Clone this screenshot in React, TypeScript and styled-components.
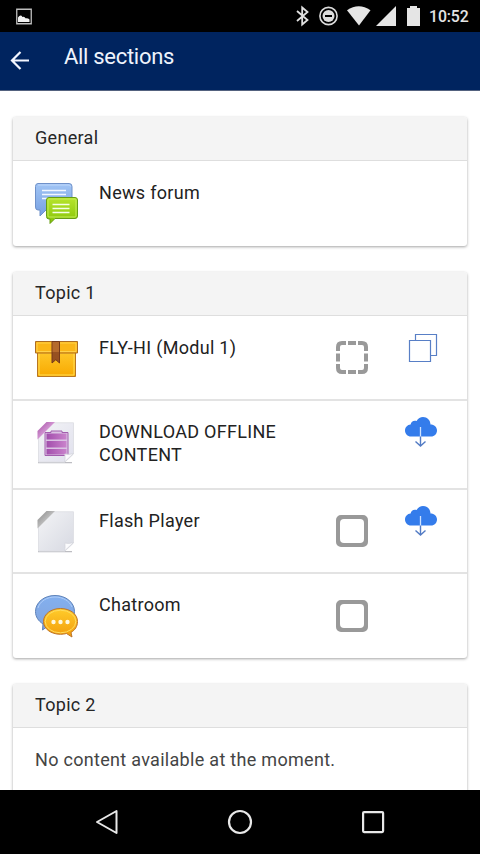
import React from "react";
import styled, { createGlobalStyle } from "styled-components";

const Global = createGlobalStyle`
  * { box-sizing: border-box; }
  body { margin: 0; background: #fff; font-family: Roboto, "Liberation Sans", sans-serif; }
  svg { display: block; flex: none; }
`;

const Screen = styled.div`
  width: 480px;
  height: 854px;
  display: flex;
  flex-direction: column;
  overflow: hidden;
  background: #fff;
`;

const StatusBar = styled.div`
  height: 32px;
  flex: none;
  background: #000;
  display: flex;
  align-items: center;
  padding: 0 9px 0 16px;
`;

const StatusIcons = styled.div`
  margin-left: auto;
  display: flex;
  align-items: center;
`;

const Clock = styled.span`
  width: 42px;
  margin-left: 9px;
  color: #e4e4e4;
  font-size: 15.8px;
  font-weight: 500;
  line-height: 33px;
  letter-spacing: -0.1px;
  white-space: nowrap;
`;

const AppBar = styled.header`
  height: 59px;
  flex: none;
  background: #00245f;
  border-bottom: 1px solid #53627f;
  display: flex;
  align-items: center;
  padding-left: 10px;
`;

const Title = styled.h1`
  margin: 0 0 9px 34px;
  color: #eef3fc;
  font-size: 22px;
  font-weight: 400;
  line-height: 28px;
  letter-spacing: -0.3px;
`;

const Content = styled.main`
  flex: 1;
  min-height: 0;
  overflow: hidden;
  padding: 26px 13px 0;
  display: flex;
  flex-direction: column;
  gap: 26px;
`;

const Card = styled.section<{ $open?: boolean }>`
  flex: none;
  height: ${(p) => (p.$open ? "160px" : "auto")};
  border-radius: 3px;
  background: #fff;
  box-shadow: 0 1px 3px rgba(0, 0, 0, 0.36);
`;

const CardHeader = styled.h2`
  margin: 0;
  height: 44px;
  padding-left: 22px;
  border-radius: 3px 3px 0 0;
  background: #f4f4f4;
  border-bottom: 1px solid #dedede;
  color: #262626;
  font-size: 18px;
  font-weight: 400;
  line-height: 42px;
  letter-spacing: 0.3px;
`;

const Row = styled.div<{ $height: number }>`
  height: ${(p) => p.$height}px;
  display: grid;
  grid-template-columns: 64px 237px 68px 34px;
  align-items: start;
  padding: 1px 0 0 22px;
  & + & { border-top: 2px solid #e3e3e3; padding-top: 0; }
`;

const ModuleIcon = styled.div`
  padding-top: 20px;
`;

const Label = styled.div`
  padding-top: 20px;
  max-width: 210px;
  color: #222;
  font-size: 18px;
  line-height: 22.5px;
  letter-spacing: 0.3px;
`;

const CheckSlot = styled.div<{ $top?: number }>`
  padding-top: ${(p) => p.$top ?? 25}px;
`;

const CheckBox = styled.div`
  width: 32px;
  height: 32px;
  border: 4px solid #999;
  border-radius: 5px;
  background: #999;
  &::after {
    content: "";
    display: block;
    width: 24px;
    height: 24px;
    border-radius: 4px;
    background: #fff;
  }
`;

const Action = styled.div`
  padding-top: 14px;
`;

const Note = styled.p`
  margin: 0;
  padding: 21px 22px;
  color: #444;
  font-size: 18px;
  line-height: 22px;
  letter-spacing: 0.3px;
`;

const NavBar = styled.nav`
  height: 64px;
  flex: none;
  background: #000;
  display: flex;
  justify-content: space-between;
  align-items: center;
  padding: 0 94px;
`;

const ForumIcon = () => (
  <svg width="43" height="44" viewBox="0 0 43 44">
    <defs>
      <linearGradient id="forumBlue" x2="0" y2="1"><stop stopColor="#a1c5f5" /><stop offset="1" stopColor="#769fe1" /></linearGradient>
      <linearGradient id="forumGreen" x2="0" y2="1"><stop stopColor="#b7e52c" /><stop offset="1" stopColor="#86c307" /></linearGradient>
    </defs>
    <path d="M3 1.500h31q3 0 3 3V25q0 3-3 3H11l-6 6V28H3Q.5 28 .5 25V4.500Q.5 1.500 3 1.500Z" fill="url(#forumBlue)" stroke="#6f91c9" />
    <path d="M3 3h31q1.500 0 1.500 1.500" fill="none" stroke="#bed7fa" />
    <path d="M7 8.500h24M7 12.500h24M7 16.500h15" stroke="#f2f7ff" strokeWidth="1.500" />
    <path d="M14 15.500h26q2.500 0 2.500 2.500v16q0 2.500-2.500 2.500H20l-5 5V37h-1q-2.500 0-2.500-2.500V18q0-2.500 2.500-2.500Z" fill="url(#forumGreen)" stroke="#669c14" />
    <path d="M14 17h26q1 0 1 1v16q0 1-1 1H14q-1 0-1-1V18q0-1 1-1Z" fill="none" stroke="#c3ec59" />
    <path d="M17.500 22.500h17M17.500 26.500h17M17.500 30.500h17" stroke="#f6ffe6" strokeWidth="1.500" />
  </svg>
);

const PackageIcon = () => (
  <svg width="43" height="43" viewBox="0 0 43 43">
    <defs>
      <linearGradient id="boxFill" x2="0" y2="1"><stop stopColor="#ffc82b" /><stop offset="1" stopColor="#f8a900" /></linearGradient>
    </defs>
    <path d="M2.500 14h38v25.500h-38Z" fill="url(#boxFill)" stroke="#b87620" />
    <path d="M4 15h35v23H4Z" fill="none" stroke="#ffdd56" />
    <path d="M.5 4.500h42V16H.5Z" fill="#fbb618" stroke="#ad6d23" />
    <path d="M2 6h39v8.500H2Z" fill="none" stroke="#ffd24b" />
    <path d="M17 4.500h7.500V26l-3.700-3.300L17 26Z" fill="#975121" stroke="#74391a" />
    <path d="M17.500 5h6.500v10h-6.500Z" fill="#b56b2d" />
  </svg>
);

const FileIcon = ({ archive = false }: { archive?: boolean }) => {
  const id = archive ? "archive" : "plain";
  return (
    <svg width="43" height="44" viewBox="0 0 43 44">
      <defs>
        <linearGradient id={`${id}Page`} x2="1" y2="1"><stop stopColor="#f3f4f6" /><stop offset="1" stopColor={archive ? "#e0e0ed" : "#d7d9e2"} /></linearGradient>
        <linearGradient id={`${id}Band`} x2="1" y2="1"><stop stopColor={archive ? "#a14aa1" : "#858585"} /><stop offset=".5" stopColor={archive ? "#d295d2" : "#bcbcbc"} /><stop offset="1" stopColor={archive ? "#a251a1" : "#969696"} /></linearGradient>
        <linearGradient id="archiveFill" x2="1"><stop stopColor="#a24eac" /><stop offset="1" stopColor="#ca83cc" /></linearGradient>
      </defs>
      <path d="M3 41.700h34" fill="none" stroke="#bdbdc2" strokeWidth="1.200" />
      <path d="M12 1.800h26.500V33L30 41H3.500V11Z" fill={`url(#${id}Page)`} stroke="#e0e1e6" />
      {archive && (
        <>
          <path d="M10 11.500h6V10h11v1.500h6v23H10Z" fill="#dac4e4" stroke="#a35eae" />
          <path d="M11.500 12.500h20v6h-20Zm0 7.500h20v6.500h-20Zm0 8h20v5.500h-20Z" fill="url(#archiveFill)" />
        </>
      )}
      <path d="M29.500 41q1-3.500.3-8 4 1 8.700-.5Z" fill="#fbfbfd" stroke="#d3d4dc" strokeWidth=".8" />
      <path d="M11.500 1H20L2.500 18.500V10Z" fill={`url(#${id}Band)`} />
    </svg>
  );
};

const ChatIcon = () => (
  <svg width="43" height="44" viewBox="0 0 43 44">
    <defs>
      <linearGradient id="chatBlue" x2="0" y2="1"><stop stopColor="#83b0ef" /><stop offset="1" stopColor="#83a4dc" /></linearGradient>
      <linearGradient id="chatGold" x2="0" y2="1"><stop stopColor="#ffcc2b" /><stop offset="1" stopColor="#f39d0c" /></linearGradient>
    </defs>
    <path d="M20 1.500c11 0 19.500 7 19.500 16S31 33 20 33q-4 0-7-1l-5.500 4 .5-6C3.500 27 .5 23 .5 17.500.5 8.500 9 1.500 20 1.500Z" fill="url(#chatBlue)" stroke="#5f83b9" />
    <path d="M3 14C5 7 12 3 20 3s14.500 4 17 10" fill="none" stroke="#afcdf8" />
    <path d="M25.500 14.500c9.500 0 17 5.500 17 13 0 5-2.500 8.500-6.500 11l1 4.500-5.500-3.500q-3 .8-6 .8c-9.500 0-17-5.500-17-12.800s7.500-13 17-13Z" fill="url(#chatGold)" stroke="#bd7429" />
    <ellipse cx="25.500" cy="27.500" rx="15.300" ry="11.300" fill="none" stroke="#ffdd60" />
    <g fill="#fff8df"><circle cx="18.500" cy="28" r="2.200" /><circle cx="25.500" cy="28" r="2.200" /><circle cx="32.500" cy="28" r="2.200" /></g>
  </svg>
);

const DashedCheck = () => (
  <svg width="32" height="33" viewBox="0 0 32 33" fill="none" stroke="#999" strokeWidth="4">
    <path d="M2 10V6q0-4 4-4h4M22 2h4q4 0 4 4v4M30 23v4q0 4-4 4h-4M10 31H6q-4 0-4-4v-4M12 2h8M12 31h8M2 12.500v8M30 12.500v8" />
  </svg>
);

const CopyIcon = () => (
  <svg width="34" height="34" viewBox="0 0 34 34" fill="none" stroke="#587fc6" strokeWidth="1.200">
    <path d="M5.500 9.500h21v21h-21ZM11.500 9.500v-6h21v21h-6" />
  </svg>
);

const CloudIcon = () => (
  <svg width="34" height="34" viewBox="0 0 34 34">
    <path d="M7 21.500C3.500 21.500 1 18.800 1 15.500 1 12.200 3.400 9.700 6.600 9.400 7 6.500 10 5 12.600 6.100 14 3.400 16.500 2 19 2c4.200 0 7.500 3.300 7.500 7.500 3.700 0 6.500 2.600 6.500 6s-2.500 6-6 6Z" fill="#347ceb" />
    <path d="M16.500 12v10" stroke="#cfe3ff" strokeWidth="1.300" />
    <path d="M16.500 21.500V31M11.500 26.500l5 4.500 5-4.500" fill="none" stroke="#527bc4" strokeWidth="1.400" />
  </svg>
);

export default function App() {
  return (
    <>
      <Global />
      <Screen>
        <StatusBar>
          <svg width="16" height="17" viewBox="0 0 16 17">
            <path d="M.75 1.250h14.500v14.500H.75Z" fill="none" stroke="#bdbdbd" strokeWidth="1.300" />
            <path d="M2 14v-4.500q2.500-3.500 4.500-.5 2-1 3 1.300 2.500-.5 4 1.200V14Z" fill="#f0f0f0" />
          </svg>
          <StatusIcons>
            <svg width="124" height="22" viewBox="296 5 124 22">
              <path d="m297 11 10.500 9-5.300 4.500v-17l5.300 4.500-10.500 9" fill="none" stroke="#e1e1e1" strokeWidth="1.800" />
              <circle cx="328.500" cy="16" r="8.600" fill="none" stroke="#dcdcdc" strokeWidth="1.600" />
              <circle cx="328.500" cy="16" r="6" fill="#dcdcdc" />
              <path d="M325 16h7" stroke="#000" strokeWidth="2" />
              <path d="M347 10.200q11.700-8 23.500 0L359 25.500Z" fill="#e5e5e5" />
              <path d="M396 6v20h-20Z" fill="#e5e5e5" />
              <path d="M407 8h3V6h7v2h3v18h-13Z" fill="#e5e5e5" />
            </svg>
            <Clock>10:52</Clock>
          </StatusIcons>
        </StatusBar>
        <AppBar>
          <svg width="20" height="20" viewBox="0 0 20 20" fill="none" stroke="#f3f6ff" strokeWidth="2.200">
            <path d="M19 9.500H2M10.500 1 2 9.500l8.500 8.500" />
          </svg>
          <Title>All sections</Title>
        </AppBar>
        <Content>
          <Card>
            <CardHeader>General</CardHeader>
            <Row $height={85}>
              <ModuleIcon><ForumIcon /></ModuleIcon>
              <Label>News forum</Label>
            </Row>
          </Card>
          <Card>
            <CardHeader>Topic 1</CardHeader>
            <Row $height={83}>
              <ModuleIcon><PackageIcon /></ModuleIcon>
              <Label>FLY-HI (Modul 1)</Label>
              <CheckSlot $top={24}><DashedCheck /></CheckSlot>
              <Action><CopyIcon /></Action>
            </Row>
            <Row $height={89}>
              <ModuleIcon><FileIcon archive /></ModuleIcon>
              <Label>DOWNLOAD OFFLINE CONTENT</Label>
              <CheckSlot />
              <Action><CloudIcon /></Action>
            </Row>
            <Row $height={84}>
              <ModuleIcon><FileIcon /></ModuleIcon>
              <Label>Flash Player</Label>
              <CheckSlot><CheckBox /></CheckSlot>
              <Action><CloudIcon /></Action>
            </Row>
            <Row $height={86}>
              <ModuleIcon><ChatIcon /></ModuleIcon>
              <Label>Chatroom</Label>
              <CheckSlot $top={26}><CheckBox /></CheckSlot>
            </Row>
          </Card>
          <Card $open>
            <CardHeader>Topic 2</CardHeader>
            <Note>No content available at the moment.</Note>
          </Card>
        </Content>
        <NavBar>
          <svg width="26" height="28" viewBox="0 0 26 28" fill="none" stroke="#e8e8e8" strokeWidth="2">
            <path d="M22.500 3v22L3 14Z" strokeLinejoin="round" />
          </svg>
          <svg width="26" height="26" viewBox="0 0 26 26" fill="none" stroke="#e8e8e8" strokeWidth="2.200">
            <circle cx="13" cy="13" r="11" />
          </svg>
          <svg width="26" height="26" viewBox="0 0 26 26" fill="none" stroke="#e8e8e8" strokeWidth="2.200">
            <rect x="3.100" y="3.100" width="20" height="20" rx="1" />
          </svg>
        </NavBar>
      </Screen>
    </>
  );
}
